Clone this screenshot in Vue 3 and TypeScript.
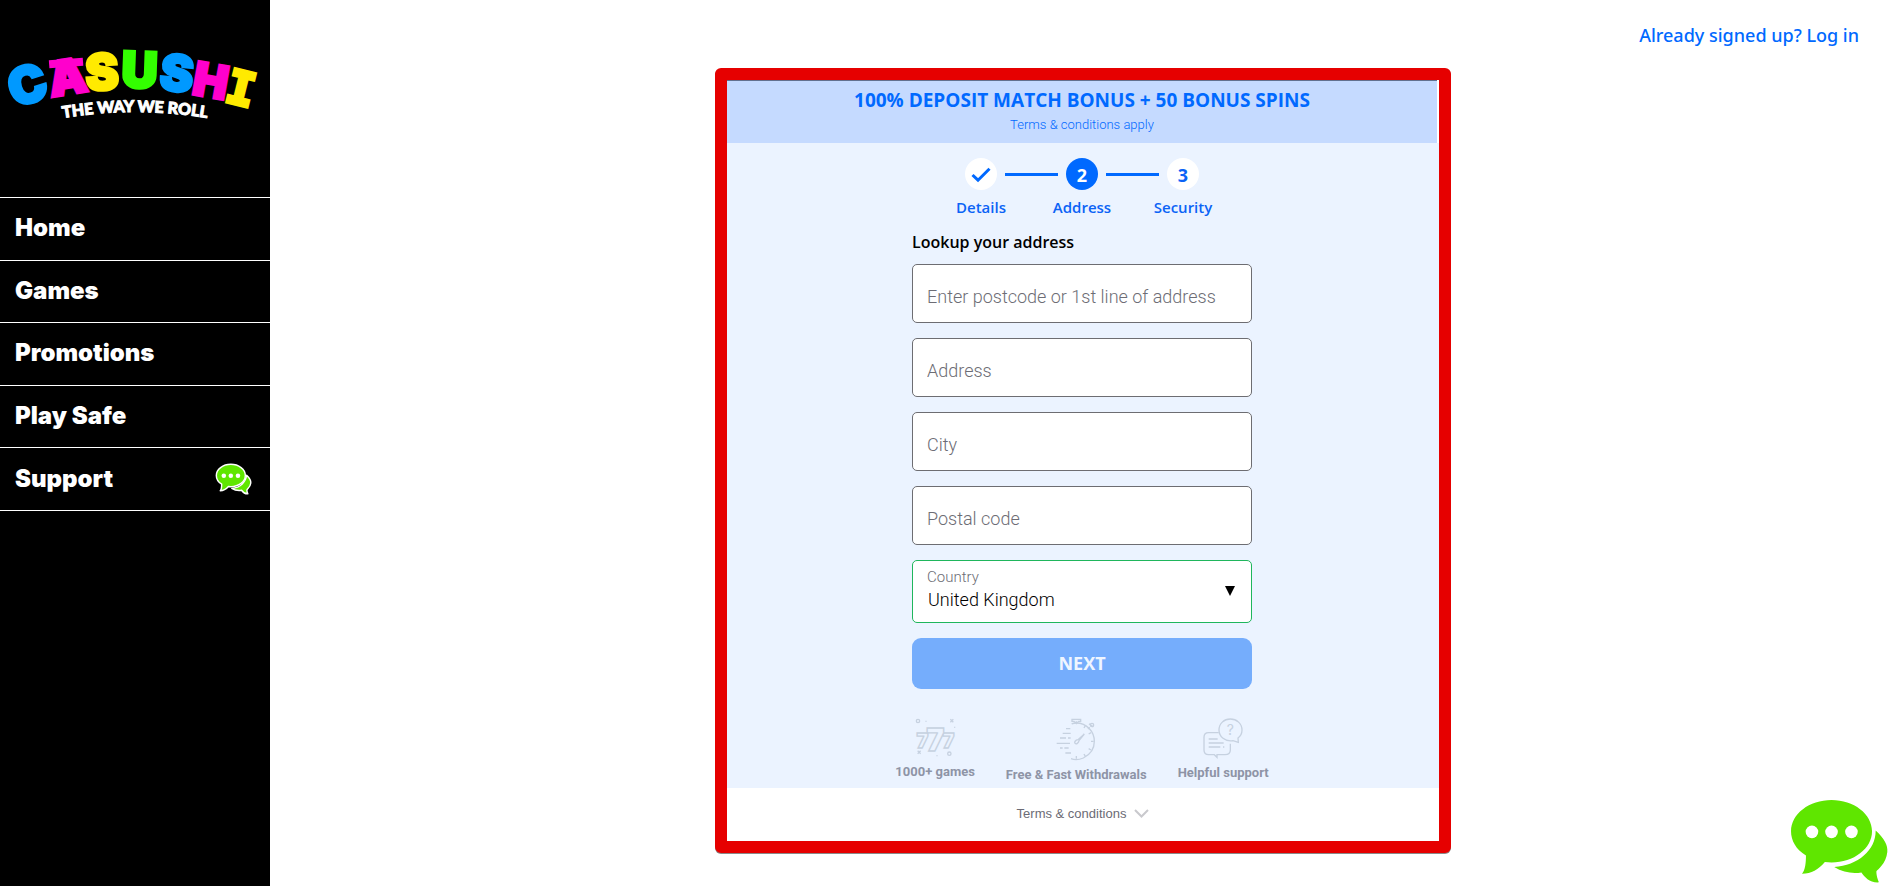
<script setup lang="ts">
import { ref } from 'vue'

interface LogoLetter {
  char: string
  x: number
  y: number
  angle: number
  color: string
  size: number
}

const logoLetters: LogoLetter[] = [
  { char: 'C', x: 33, y: 102, angle: -18, color: '#0099ff', size: 51 },
  { char: 'A', x: 70, y: 94, angle: -9, color: '#ff00cc', size: 48 },
  { char: 'S', x: 103, y: 90, angle: -3, color: '#ffea00', size: 50 },
  { char: 'U', x: 139, y: 88, angle: 2, color: '#33ff00', size: 50 },
  { char: 'S', x: 175, y: 91, angle: 6, color: '#0099ff', size: 50 },
  { char: 'H', x: 208, y: 97, angle: 10, color: '#ff00cc', size: 46 },
]

const navItems: string[] = ['Home', 'Games', 'Promotions', 'Play Safe', 'Support']

const fields = [
  { id: 'lookup', label: 'Enter postcode or 1st line of address' },
  { id: 'address', label: 'Address' },
  { id: 'city', label: 'City' },
  { id: 'postal', label: 'Postal code' },
]

const values = ref<Record<string, string>>({ lookup: '', address: '', city: '', postal: '' })
const country = ref('United Kingdom')
</script>

<template>
  <div class="page">
    <aside class="sidebar">
      <a class="logo" href="#" aria-label="Casushi">
        <svg viewBox="0 0 270 110" width="270" height="110">
          <g transform="translate(0 -30)">
            <text
              v-for="(l, i) in logoLetters"
              :key="i"
              class="logo-letter"
              text-anchor="middle"
              :x="l.x"
              :y="l.y"
              :font-size="l.size"
              :fill="l.color"
              :stroke="l.color"
              :transform="`rotate(${l.angle} ${l.x} ${l.y})`"
            >{{ l.char }}</text>
            <text
              class="logo-slab"
              text-anchor="middle"
              x="237"
              y="104"
              font-size="46"
              fill="#ffea00"
              stroke="#ffea00"
              transform="rotate(14 237 104)"
            >I</text>
            <rect x="49" y="59" width="34" height="8" fill="#ff00cc" transform="rotate(-4 66 62)" />
            <path id="tagline-arc" d="M52 120 Q135 104 218 120" fill="none" />
            <text class="logo-tagline" text-anchor="middle">
              <textPath href="#tagline-arc" startOffset="50%">THE WAY WE ROLL</textPath>
            </text>
          </g>
        </svg>
      </a>
      <nav>
        <ul class="nav">
          <li v-for="item in navItems" :key="item">
            <a href="#">
              <span>{{ item }}</span>
              <svg v-if="item === 'Support'" viewBox="-8 -8 311 269" width="37" height="32">
                <g class="chat-outlined">
                  <path d="M258 95C285 120 295 140 293 160C290 195 260 215 260 218C260 235 268 251 268 251C240 253 225 235 215 221C190 225 160 222 133 205C210 200 250 150 258 95Z" />
                  <path d="M125 3C192 3 247 45 247 97S192 191 125 191L105 190C85 213 65 225 36 225C46 215 48 190 48 170C18 152 3 125 3 97C3 45 58 3 125 3Z" />
                </g>
                <g fill="#ffffff">
                  <circle cx="66" cy="99" r="19" />
                  <circle cx="125" cy="99" r="19" />
                  <circle cx="185" cy="99" r="19" />
                </g>
              </svg>
            </a>
          </li>
        </ul>
      </nav>
    </aside>

    <main class="main">
      <header class="topbar">
        <a href="#">Already signed up? Log in</a>
      </header>

      <section class="panel">
        <div class="promo">
          <h1>100% DEPOSIT MATCH BONUS + 50 BONUS SPINS</h1>
          <a href="#">Terms &amp; conditions apply</a>
        </div>

        <form class="form" @submit.prevent>
          <ol class="steps">
            <li>
              <span class="dot">
                <svg viewBox="0 0 20 16" width="20" height="16">
                  <path d="M1.5 8 7 13.2 18.5 1.8" fill="none" stroke="#0069ff" stroke-width="3" />
                </svg>
              </span>
              <span class="step-label">Details</span>
            </li>
            <li class="line" aria-hidden="true"></li>
            <li>
              <span class="dot current">2</span>
              <span class="step-label">Address</span>
            </li>
            <li class="line" aria-hidden="true"></li>
            <li>
              <span class="dot">3</span>
              <span class="step-label">Security</span>
            </li>
          </ol>

          <div class="fields">
            <h2>Lookup your address</h2>
            <input
              v-for="f in fields"
              :id="f.id"
              :key="f.id"
              v-model="values[f.id]"
              class="field"
              type="text"
              :placeholder="f.label"
              :aria-label="f.label"
            />
            <div class="select-box">
              <label for="country">Country</label>
              <select id="country" v-model="country">
                <option>United Kingdom</option>
              </select>
              <svg class="caret" viewBox="0 0 10 10" width="10" height="10">
                <path d="M0 0H10L5 10Z" fill="#000000" />
              </svg>
            </div>
            <button class="next" type="submit">NEXT</button>
          </div>

          <ul class="perks">
            <li>
              <svg viewBox="0 0 123 120" width="41" height="40">
                <g class="ink">
                  <circle cx="9" cy="9" r="5" />
                  <circle cx="103" cy="107" r="5" />
                  <path d="M106 4 115 13M115 4 106 13M8 98 17 107M17 98 8 107" />
                  <path d="M33 8v3M119 26v3M66 112v3" />
                </g>
                <g class="ink sevens" text-anchor="middle">
                  <text x="22" y="90" font-size="60">7</text>
                  <text x="100" y="90" font-size="60">7</text>
                  <text x="61" y="100" font-size="92">7</text>
                </g>
              </svg>
              <span>1000+ games</span>
            </li>
            <li>
              <svg viewBox="0 0 123 129" width="41" height="43">
                <g class="ink">
                  <path d="M45 122C55 126 68 126 82 120C103 110 115 92 115 70C115 40 92 15 61 15C52 15 49 17 47 18" />
                  <path d="M48 4H74V10H68L61 17L54 10H48ZM61 10V16" />
                  <circle cx="108" cy="21" r="5" />
                  <path d="M99 17 112 27M101 28 96 33" />
                  <path d="M85 48 66 65C58 66 54 73 57 76C61 80 68 75 69 68Z" />
                  <path d="M105 70H113M61 114V122M98 48 105 44M84 30 88 23M98 92 105 96M84 108 88 115" />
                  <path d="M30 32H43M20 46H44M12 60H30M36 60H44M2 76H42M12 90H20M25 90H38M28 105H45" />
                </g>
              </svg>
              <span>Free &amp; Fast Withdrawals</span>
            </li>
            <li>
              <svg viewBox="0 0 120 123" width="40" height="41">
                <g class="ink">
                  <path d="M47 44H17C8 44 3 50 3 58V96C3 105 9 110 17 110H34L42 118V110H66C76 110 82 104 82 96V77" />
                  <path d="M106 73 90 68C66 72 48 56 48 36C48 17 63 3 82 3S117 17 117 36C117 47 112 55 105 60Z" />
                  <path d="M17 63H44M17 75H62M17 87H52M60 87H64" />
                </g>
                <text class="question" x="82" y="51" text-anchor="middle" font-size="42">?</text>
              </svg>
              <span>Helpful support</span>
            </li>
          </ul>
        </form>

        <button class="terms" type="button">
          <span>Terms &amp; conditions</span>
          <svg viewBox="0 0 15 9" width="15" height="9">
            <path d="M1 1 7.5 7.5 14 1" fill="none" stroke="#c9c9cd" stroke-width="2" />
          </svg>
        </button>
      </section>
    </main>

    <button class="chat" type="button" aria-label="Open chat">
      <svg viewBox="0 0 295 253" width="98" height="84">
        <g fill="#5fe600">
          <path d="M258 95C285 120 295 140 293 160C290 195 262 215 260 218C260 235 268 251 268 251C240 253 225 235 215 221C190 225 160 222 133 205C205 200 258 155 258 95Z" />
          <path d="M125 3C192 3 247 45 247 97S192 191 125 191L105 190C85 213 65 225 36 225C46 215 48 190 48 170C18 152 3 125 3 97C3 45 58 3 125 3Z" />
        </g>
        <g fill="#ffffff">
          <circle cx="66" cy="99" r="19" />
          <circle cx="125" cy="99" r="19" />
          <circle cx="185" cy="99" r="19" />
        </g>
      </svg>
    </button>
  </div>
</template>

<style>
body {
  margin: 0;
  background: #ffffff;
}
</style>

<style scoped>
.page {
  display: flex;
  min-height: 100vh;
  font-family: 'Open Sans', sans-serif;
}

.page *,
.page *::before {
  box-sizing: border-box;
}

a {
  color: inherit;
  text-decoration: none;
}

ul,
ol {
  margin: 0;
  padding: 0;
  list-style: none;
}

.sidebar {
  flex: 0 0 270px;
  background: #000000;
  color: #ffffff;
}

.logo {
  display: block;
  padding: 30px 0 57px;
}

.logo svg {
  display: block;
}

.logo-letter {
  font-family: Inter, sans-serif;
  font-weight: 900;
  stroke-width: 3;
}

.logo-slab {
  font-family: 'DejaVu Sans Mono', monospace;
  font-weight: 700;
  stroke-width: 4;
}

.logo-tagline {
  font-family: Lato, sans-serif;
  font-size: 16px;
  font-weight: 900;
  fill: #ffffff;
  stroke: #ffffff;
  stroke-width: 1;
}

.nav {
  display: grid;
  grid-auto-rows: 1fr;
  min-height: 314px;
  border-top: 1px solid #ffffff;
}

.nav li {
  border-bottom: 1px solid #ffffff;
}

.nav a {
  display: flex;
  align-items: center;
  justify-content: space-between;
  height: 100%;
  padding: 0 18px 1px 15px;
  font-family: Inter, sans-serif;
  font-size: 24px;
  font-weight: 900;
  line-height: 30px;
}

.chat-outlined path {
  fill: #5fe600;
  stroke: #ffffff;
  stroke-width: 12;
  stroke-linejoin: round;
}

.main {
  flex: 1;
  min-width: 0;
  padding-left: 6px;
}

.topbar {
  display: flex;
  justify-content: flex-end;
  padding: 21px 31px 19px;
  font-family: 'Noto Sans', sans-serif;
  font-size: 18px;
  font-weight: 500;
  line-height: 28px;
  color: #0069ff;
}

.panel {
  width: calc(100% - 48px);
  max-width: 736px;
  margin: 0 auto;
  border: 12px solid #e60000;
  border-radius: 6px;
  box-shadow: 0 1px 0 #8a8a8a;
  background: #ffffff;
}

.promo {
  margin-right: 2px;
  padding: 6px 0 7px;
  border-top: 1px solid #62708f;
  background: #c5daff;
  color: #0069ff;
  text-align: center;
}

.promo h1 {
  margin: 0;
  font-size: 19px;
  font-weight: 700;
  line-height: 26px;
}

.promo a {
  display: block;
  padding-top: 1px;
  font-family: Roboto, sans-serif;
  font-size: 13px;
  font-weight: 300;
  line-height: 22px;
}

.form {
  padding: 15px 2px 3px 0;
  background: #ebf3ff;
}

.steps {
  display: flex;
  justify-content: center;
  color: #0b63f6;
}

.steps li {
  display: flex;
  flex-direction: column;
  align-items: center;
  width: 48px;
}

.steps .line {
  flex: 0 0 53px;
  height: 3px;
  margin-top: 15px;
  background: #0069ff;
}

.dot {
  display: flex;
  align-items: center;
  justify-content: center;
  width: 32px;
  height: 32px;
  padding-top: 2px;
  border-radius: 50%;
  background: #ffffff;
  font-size: 18px;
  font-weight: 700;
  line-height: 24px;
}

.dot.current {
  background: #0069ff;
  color: #ffffff;
}

.step-label {
  margin-top: 6px;
  font-size: 15px;
  font-weight: 600;
  line-height: 22px;
  white-space: nowrap;
}

.fields {
  display: flex;
  flex-direction: column;
  gap: 15px;
  max-width: 340px;
  margin: 12px auto 0;
}

.fields h2 {
  margin: 0 0 -5px;
  font-size: 16px;
  font-weight: 600;
  line-height: 24px;
  color: #000000;
}

.field {
  width: 100%;
  height: 59px;
  padding: 6px 14px 0;
  border: 1px solid #6d6d72;
  border-radius: 5px;
  background: #ffffff;
  font-family: Roboto, sans-serif;
  font-size: 18px;
  font-weight: 300;
  color: #000000;
}

.field::placeholder {
  color: #6d6d75;
  opacity: 1;
}

.select-box {
  position: relative;
  display: flex;
  flex-direction: column;
  padding: 5px 14px 12px;
  border: 1px solid #1fb65c;
  border-radius: 5px;
  background: #ffffff;
  font-family: Roboto, sans-serif;
  font-weight: 300;
}

.select-box label {
  font-size: 15px;
  line-height: 22px;
  color: #6d6d75;
}

.select-box select {
  width: 100%;
  height: 22px;
  padding: 0 0 0 1px;
  border: 0;
  appearance: none;
  background: transparent;
  font-family: inherit;
  font-size: 18px;
  font-weight: 300;
  color: #000000;
}

.caret {
  position: absolute;
  top: 25px;
  right: 16px;
  pointer-events: none;
}

.next {
  height: 51px;
  padding: 0 0 2px;
  border: 0;
  border-radius: 9px;
  background: #75adfc;
  color: #eff6ff;
  font-family: 'Open Sans', sans-serif;
  font-size: 18px;
  font-weight: 700;
}

.perks {
  display: flex;
  justify-content: center;
  gap: 31px;
  margin-top: 29px;
  color: #8e94a6;
  font-family: Roboto, sans-serif;
  font-size: 13px;
  font-weight: 700;
  line-height: 20px;
}

.perks li {
  display: flex;
  flex-direction: column;
  align-items: center;
  gap: 4px;
}

.perks svg {
  display: block;
  overflow: visible;
}

.ink {
  fill: none;
  stroke: #c6d1e0;
  stroke-width: 4;
}

.sevens text {
  font-family: Inter, sans-serif;
  font-weight: 900;
  fill: #ebf3ff;
}

.question {
  font-family: Inter, sans-serif;
  font-weight: 400;
  fill: #c6d1e0;
}

.terms {
  display: flex;
  align-items: center;
  justify-content: center;
  gap: 8px;
  width: 100%;
  height: 53px;
  padding: 0 0 2px;
  border: 0;
  background: #ffffff;
  color: #6b6b75;
  font-family: 'Liberation Sans', sans-serif;
  font-size: 13px;
}

.chat {
  position: fixed;
  right: 2px;
  bottom: 3px;
  padding: 0;
  border: 0;
  background: none;
}

.chat svg {
  display: block;
}
</style>
